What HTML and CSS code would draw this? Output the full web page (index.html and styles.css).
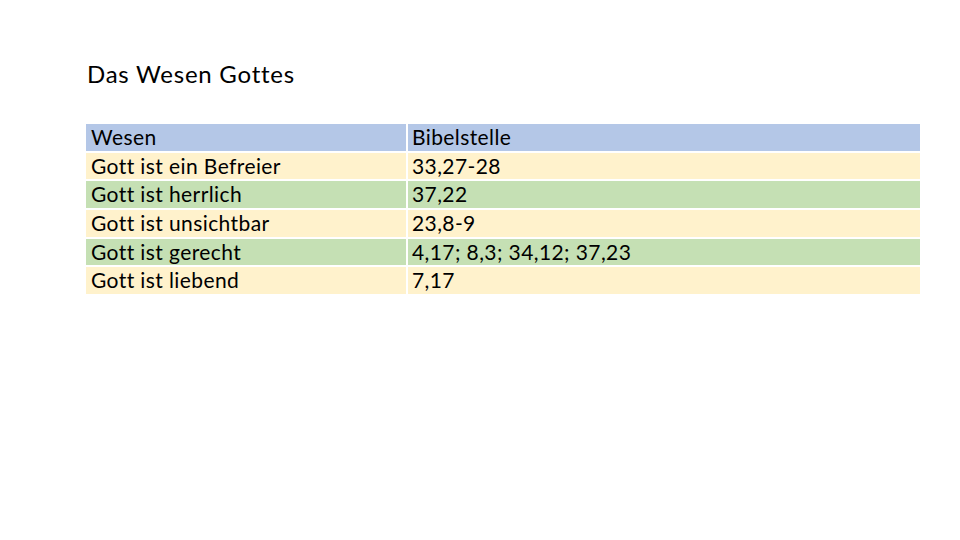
FILE: index.html
```html
<!DOCTYPE html>
<html lang="de">
<head>
<meta charset="utf-8">
<title>Das Wesen Gottes</title>
<link rel="stylesheet" href="styles.css">
</head>
<body>
<main class="slide">
  <h1 class="title">Das Wesen Gottes</h1>
  <div class="table">
    <div class="row head"><div class="cell c1">Wesen</div><div class="cell c2">Bibelstelle</div></div>
    <div class="row odd"><div class="cell c1">Gott ist ein Befreier</div><div class="cell c2">33,27-28</div></div>
    <div class="row even"><div class="cell c1">Gott ist herrlich</div><div class="cell c2">37,22</div></div>
    <div class="row odd"><div class="cell c1">Gott ist unsichtbar</div><div class="cell c2">23,8-9</div></div>
    <div class="row even"><div class="cell c1">Gott ist gerecht</div><div class="cell c2">4,17; 8,3; 34,12; 37,23</div></div>
    <div class="row odd"><div class="cell c1">Gott ist liebend</div><div class="cell c2">7,17</div></div>
  </div>
</main>
</body>
</html>
```
FILE: styles.css
```css
html, body {
  margin: 0;
  padding: 0;
  background: #ffffff;
}
.slide {
  width: 960px;
  height: 540px;
  box-sizing: border-box;
  padding: 61px 40px 0 86px;
  font-family: Lato, "Liberation Sans", sans-serif;
  color: #000000;
}
.title {
  margin: 0 0 0 1px;
  font-size: 24px;
  letter-spacing: 0.75px;
  font-weight: 400;
  line-height: 26px;
  height: 26px;
}
.table {
  margin-top: 37px;
  display: flex;
  flex-direction: column;
  gap: 2.2px;
}
.row {
  display: grid;
  grid-template-columns: 320px 512px;
  column-gap: 2px;
  height: 26.5px;
}
.cell {
  font-size: 21px;
  letter-spacing: 0.4px;
  line-height: 26.5px;
  padding-left: 5px;
  white-space: nowrap;
}
.head .cell { background: #b4c7e7; }
.odd .cell { background: #fff2cc; }
.even .cell { background: #c5e0b4; }
.c2 { padding-left: 4px; }
```
